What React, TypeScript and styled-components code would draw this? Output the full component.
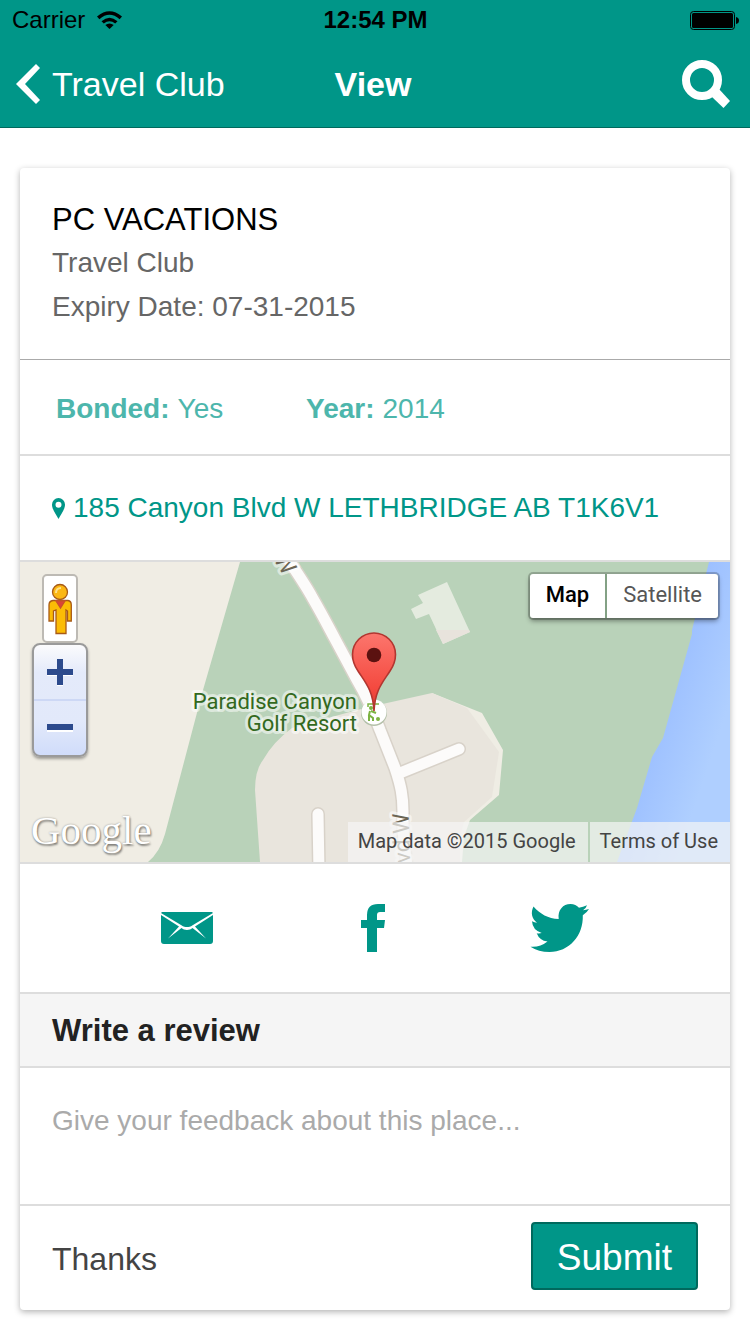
import React from "react";
import styled, { createGlobalStyle } from "styled-components";

const teal = "#009688";
const tealDark = "#00695d";
const line = "#dddddd";

const GlobalStyle = createGlobalStyle`
  *, *::before, *::after { box-sizing: border-box; }
  body {
    margin: 0;
    background: #fff;
    font-family: "Liberation Sans", Arial, sans-serif;
    font-size: 28px;
    line-height: 44px;
    color: #444;
  }
  button, textarea { font-family: inherit; margin: 0; }
  h1, h2, h3, p { margin: 0; font-weight: 400; }
`;

const Header = styled.header`
  background: ${teal};
  border-bottom: 1px solid ${tealDark};
`;

const Bar = styled.div<{ $height: number; $pad: string }>`
  display: grid;
  grid-template-columns: 1fr auto 1fr;
  align-items: center;
  height: ${(p) => p.$height}px;
  padding: ${(p) => p.$pad};
`;

const StatusText = styled.span<{ $bold?: boolean }>`
  display: flex;
  align-items: center;
  gap: 12px;
  font-size: 24px;
  line-height: 40px;
  font-weight: ${(p) => (p.$bold ? 700 : 400)};
  color: #000;
`;

const Battery = styled.svg`
  justify-self: end;
`;

const BackLink = styled.a`
  display: flex;
  align-items: center;
  gap: 12px;
  justify-self: start;
  color: #fff;
  font-size: 34px;
  text-decoration: none;
`;

const Title = styled.h1`
  color: #fff;
  font-size: 34px;
  font-weight: 700;
`;

const IconButton = styled.button`
  display: flex;
  justify-self: end;
  padding: 0;
  border: 0;
  background: none;
  color: #fff;
`;

const Card = styled.main`
  margin: 40px 20px 24px;
  border-radius: 4px;
  background: #fff;
  box-shadow: 0 2px 6px rgba(0, 0, 0, 0.3);
  overflow: hidden;
`;

const Section = styled.section<{ $pad: string; $border?: string }>`
  padding: ${(p) => p.$pad};
  border-bottom: ${(p) => p.$border ?? `2px solid ${line}`};
`;

const Name = styled.h2`
  color: #000;
  font-size: 31px;
  line-height: 42px;
`;

const Detail = styled.p`
  color: #666;
`;

const Facts = styled.dl`
  display: flex;
  margin: 0;
  color: #4db6ac;
`;

const Fact = styled.div`
  display: flex;
  gap: 8px;
  width: 250px;
  dt { font-weight: 700; }
  dd { margin: 0; }
`;

const Address = styled.a`
  display: flex;
  align-items: center;
  gap: 8px;
  color: ${teal};
  text-decoration: none;
  white-space: nowrap;
`;

const MapFrame = styled.section`
  position: relative;
  height: 302px;
  border-bottom: 2px solid ${line};
  font-family: Roboto, sans-serif;
  overflow: hidden;
`;

const MapCanvas = styled.svg`
  display: block;
  width: 100%;
  height: 300px;
`;

const MapTools = styled.div`
  position: absolute;
  top: 12px;
  left: 12px;
  display: flex;
  flex-direction: column;
  align-items: center;
`;

const Pegman = styled.button`
  display: flex;
  justify-content: center;
  align-items: center;
  width: 36px;
  height: 69px;
  padding: 0;
  border: 2px solid #bdbab4;
  border-radius: 5px;
  background: #fff;
`;

const Zoom = styled.div`
  display: flex;
  flex-direction: column;
  width: 56px;
  height: 114px;
  border: 2px solid #9a9a9a;
  border-radius: 8px;
  background: linear-gradient(#fbfbfd, #e4eafa 25%, #e2e9fa 70%, #d0dcfa);
  box-shadow: 0 2px 3px rgba(0, 0, 0, 0.35);
`;

const ZoomButton = styled.button`
  display: flex;
  flex: 1;
  align-items: center;
  justify-content: center;
  padding: 0;
  border: 0;
  background: none;
  & + & { border-top: 2px solid #cdd8f5; }
`;

const MapLogo = styled.span`
  position: absolute;
  left: 11px;
  bottom: 10px;
  font-family: "Liberation Serif", serif;
  font-size: 41px;
  line-height: 44px;
  color: #fff;
  text-shadow: 0 0 2px rgba(0, 0, 0, 0.4), 1px 2px 2px rgba(0, 0, 0, 0.4);
`;

const MapTypes = styled.div`
  position: absolute;
  top: 12px;
  right: 12px;
  display: flex;
  gap: 2px;
  border-radius: 3px;
  background: #83a185;
  box-shadow: 0 0 0 2px rgba(0, 0, 0, 0.2), 0 3px 5px rgba(0, 0, 0, 0.4);
`;

const MapType = styled.button<{ $active?: boolean }>`
  height: 44px;
  padding: 0 16px 4px;
  border: 0;
  border-radius: ${(p) => (p.$active ? "3px 0 0 3px" : "0 3px 3px 0")};
  background: #fff;
  color: ${(p) => (p.$active ? "#000" : "#565656")};
  font-size: 22px;
  font-weight: ${(p) => (p.$active ? 500 : 400)};
`;

const Credits = styled.div`
  position: absolute;
  right: 0;
  bottom: 0;
  display: flex;
  gap: 2px;
`;

const Credit = styled.span`
  padding: 0 12px 2px 10px;
  background: rgba(245, 245, 245, 0.7);
  color: #444;
  font-size: 20px;
  line-height: 38px;
  a { color: inherit; text-decoration: none; }
`;

const Share = styled.nav`
  display: grid;
  grid-template-columns: repeat(3, 1fr);
  align-items: center;
  justify-items: center;
  height: 130px;
  padding: 0 78px 0 74px;
  border-bottom: 2px solid ${line};
  color: ${teal};
  a { display: flex; color: inherit; }
`;

const ReviewHead = styled.label`
  display: block;
  padding: 15px 32px 13px;
  border-bottom: 2px solid ${line};
  background: #f5f5f5;
  color: #222;
  font-size: 31px;
  font-weight: 700;
`;

const Feedback = styled.textarea`
  display: block;
  width: 100%;
  height: 138px;
  padding: 31px 32px;
  border: 0;
  border-bottom: 2px solid ${line};
  outline: 0;
  resize: none;
  color: #444;
  font-size: 28px;
  line-height: 44px;
  &::placeholder { color: #aaa; opacity: 1; }
`;

const Footer = styled.footer`
  display: flex;
  align-items: center;
  justify-content: space-between;
  padding: 16px 32px 20px;
  font-size: 32px;
`;

const Note = styled.span`
  padding-top: 6px;
`;

const Submit = styled.button`
  height: 68px;
  padding: 4px 24px 0;
  border: 2px solid ${tealDark};
  border-radius: 4px;
  background: ${teal};
  color: #fff;
  font-size: 37px;
`;

const MAIN_ROAD =
  "M262 -12 C275 8 285 22 292 35 C303 54 308 64 315 77 L337 118 C346 133 352 146 360 168 L375 206 C381 224 383 234 383 250 Q382 270 387 304";

function MapDrawing() {
  return (
    <MapCanvas viewBox="0 0 710 300" preserveAspectRatio="xMidYMid slice" role="img" aria-label="Map of Paradise Canyon Golf Resort">
      <defs>
        <linearGradient id="water" gradientUnits="userSpaceOnUse" x1="640" y1="150" x2="700" y2="170">
          <stop offset="0" stopColor="#9dc0ff" />
          <stop offset="1" stopColor="#afcfff" />
        </linearGradient>
        <linearGradient id="marker" x1="0" y1="0" x2="0" y2="1">
          <stop offset="0" stopColor="#fc766d" />
          <stop offset="0.7" stopColor="#f44a40" />
          <stop offset="1" stopColor="#e03a30" />
        </linearGradient>
      </defs>
      <rect width="710" height="300" fill="#b9d2b9" />
      <path d="M0 0H220L183 128L145 272Q140 290 128 300H0Z" fill="#f0ede4" />
      <path d="M689 0L672 68V72L643 176L632 195L617 246L597 300H710V0Z" fill="url(#water)" />
      <path d="M412 131L462 151L483 188L479 233L450 258L444 275L442 300H400Z" fill="#efede4" />
      <path
        d="M240 300L235 228Q235 208 243 198Q253 180 272 166L337 148L367 141L412 131L447 146L479 190L472 235L444 260L440 275V300Z"
        fill="#e9e5dd"
      />
      <path d="M398 33L427 20L450 70L423 82L409 52L396 57L391 47L403 41Z" fill="#e4ebdf" />
      <path d="M416 68H449L450 70L423 82Z" fill="#e8e3dc" />
      <g fill="none" strokeLinecap="round" strokeLinejoin="round">
        <g stroke="#d8d2c9" strokeWidth="14">
          <path d={MAIN_ROAD} />
          <path d="M380 211L439 187M298 252L299 310" />
        </g>
        <g stroke="#fcfbfa" strokeWidth="11">
          <path d={MAIN_ROAD} />
          <path d="M380 211L439 187M298 252L299 310" />
        </g>
      </g>
      <g fontFamily="Roboto, sans-serif" stroke="#fff" strokeOpacity="0.5" strokeWidth="6" strokeLinejoin="round" paintOrder="stroke">
        <g fill="#6b6553" fontSize="23">
          <text x="253" y="-3" transform="rotate(58 253 -3)">W</text>
          <text x="391" y="321" transform="rotate(-92 391 321)">Blvd W</text>
        </g>
        <g fill="#33691e" fontSize="22" textAnchor="end">
          <text x="337" y="147">Paradise Canyon</text>
          <text x="337" y="169">Golf Resort</text>
        </g>
      </g>
      <circle cx="354" cy="151" r="13" fill="#b4c0a9" />
      <circle cx="354" cy="150" r="12.5" fill="#fff" />
      <g fill="none" stroke="#7cb342" strokeWidth="2">
        <path d="M359 142H348V145" strokeWidth="1.500" />
        <path d="M350 149L349 153L353 156V159M349 153V159" />
        <path d="M351 149L356 151" />
      </g>
      <circle cx="351" cy="146" r="2" fill="#7cb342" />
      <circle cx="358" cy="157" r="2" fill="#7cb342" />
      <path
        d="M354 149C353 128 345 120 338 109Q332.500 101 332.500 92.500A21.500 21.500 0 0 1 375.500 92.500Q375.500 101 370 109C363 120 355 128 354 149Z"
        fill="url(#marker)"
        stroke="#b23630"
        strokeWidth="1.600"
      />
      <circle cx="354" cy="93" r="7.300" fill="#5b1210" />
    </MapCanvas>
  );
}

export default function App() {
  return (
    <>
      <GlobalStyle />
      <Header>
        <Bar $height={40} $pad="0 11px 0 12px">
          <StatusText>
            Carrier
            <svg width="25" height="18" viewBox="0 0 25 18">
              <path d="M0 5.500Q12.500 -5 25 5.500L22.600 8.200Q12.500 -0.500 2.400 8.200Z" />
              <path d="M4.500 10.300Q12.500 3.300 20.500 10.300L18.200 12.600Q12.500 8 6.800 12.600Z" />
              <path d="M12.500 18L8.300 14Q12.500 10.800 16.700 14Z" />
            </svg>
          </StatusText>
          <StatusText $bold>12:54 PM</StatusText>
          <Battery width="49" height="19" viewBox="0 0 49 19">
            <rect x="0.500" y="0.500" width="44" height="18" rx="3" fill="none" stroke="#000" />
            <rect x="2" y="2" width="41" height="15" rx="1.500" />
            <path d="M46 6Q49 6.500 49 9.500T46 13Z" />
          </Battery>
        </Bar>
        <Bar $height={87} $pad="0 20px 0 16px">
          <BackLink href="#travel-club">
            <svg width="24" height="40" viewBox="0 0 24 40">
              <path d="M0 20L20 0L24 4L9 20L24 36L20 40Z" fill="#fff" />
            </svg>
            Travel Club
          </BackLink>
          <Title>View</Title>
          <IconButton aria-label="Search">
            <svg width="48" height="48" viewBox="0 0 48 48">
              <circle cx="20" cy="20" r="16" fill="none" stroke="#fff" strokeWidth="8" />
              <path d="M37 29L48 41L41.500 48L30 37Z" fill="#fff" />
            </svg>
          </IconButton>
        </Bar>
      </Header>
      <Card>
        <Section $pad="31px 32px 30px" $border="1px solid #aaa">
          <Name>PC VACATIONS</Name>
          <Detail>Travel Club</Detail>
          <Detail>Expiry Date: 07-31-2015</Detail>
        </Section>
        <Section $pad="27px 36px 23px">
          <Facts>
            <Fact>
              <dt>Bonded:</dt>
              <dd>Yes</dd>
            </Fact>
            <Fact>
              <dt>Year:</dt>
              <dd>2014</dd>
            </Fact>
          </Facts>
        </Section>
        <Section $pad="30px 32px">
          <Address href="#map">
            <svg width="13" height="21" viewBox="0 0 13 21">
              <path d="M6.500 0A6.500 6.500 0 0 0 0 6.500C0 11.500 4 16 6.500 21C9 16 13 11.500 13 6.500A6.500 6.500 0 0 0 6.500 0ZM6.500 3.800A3 3 0 1 1 6.500 9.800A3 3 0 0 1 6.500 3.800Z" fill={teal} fillRule="evenodd" />
            </svg>
            185 Canyon Blvd W LETHBRIDGE AB T1K6V1
          </Address>
        </Section>
        <MapFrame id="map">
          <MapDrawing />
          <MapTools>
            <Pegman aria-label="Street View">
              <svg width="24" height="52" viewBox="0 0 24 52" stroke="#a85a16" strokeWidth="1.300">
                <path d="M5 17.500H20Q23.300 18 23.300 22V38H19.500V28L18 27V50.500H8V27L5.500 28V38H1V22Q1 18 5 17.500Z" fill="#fbbc05" />
                <path d="M8 18H17L12.500 25Z" fill="#db4437" stroke="#c9502c" />
                <circle cx="12" cy="9" r="7.500" fill="#fbb713" />
                <path d="M8 10Q8 5 13 5" fill="none" stroke="#ffe08a" strokeWidth="2" />
              </svg>
            </Pegman>
            <Zoom>
              <ZoomButton aria-label="Zoom in">
                <svg width="26" height="27" viewBox="0 0 26 27">
                  <path d="M10 1H16V11H26V17H16V27H10V17H0V11H10Z" fill="#fff" />
                  <path d="M10 0H16V10H26V16H16V26H10V16H0V10H10Z" fill="#2c4a8c" />
                </svg>
              </ZoomButton>
              <ZoomButton aria-label="Zoom out">
                <svg width="26" height="8" viewBox="0 0 26 8">
                  <path d="M0 1H26V8H0Z" fill="#fff" />
                  <path d="M0 0H26V6H0Z" fill="#2c4a8c" />
                </svg>
              </ZoomButton>
            </Zoom>
          </MapTools>
          <MapLogo>Google</MapLogo>
          <MapTypes>
            <MapType $active>Map</MapType>
            <MapType>Satellite</MapType>
          </MapTypes>
          <Credits>
            <Credit>Map data ©2015 Google</Credit>
            <Credit>
              <a href="#terms">Terms of Use</a>
            </Credit>
          </Credits>
        </MapFrame>
        <Share aria-label="Share">
          <a href="#email" aria-label="Email">
            <svg width="52" height="32" viewBox="0 0 52 32" fill="currentColor">
              <path d="M1 0H51L52 1L32 13C29 15 28 15 26 15S23 15 20 13L0 1Z" />
              <path d="M0 3L18 14.500L7 26.500L20.500 16C23 18.500 29 18.500 31.500 16L45 26.500L34 14.500L52 3V29Q52 32 49 32H3Q0 32 0 29Z" />
            </svg>
          </a>
          <a href="#facebook" aria-label="Facebook">
            <svg width="24" height="48" viewBox="0 0 24 48" fill="currentColor">
              <path d="M24 8H19Q16 8 16 11V16H24L23 24H16V48H6V24H0V16H6V11Q6 0 17 0H24Z" />
            </svg>
          </a>
          <a href="#twitter" aria-label="Twitter">
            <svg width="59" height="48" viewBox="0 0 59 48" fill="currentColor">
              <path d="M3.500 2.500C10 10 18 14.500 28.700 15C27.500 6 33 0 40.500 0C44 0 47 1.500 49 3.700Q53 3 57 1.200Q56 4.500 53 6.300Q56 6 59 5Q57 8.500 52.800 11.300C53.500 32 39 48 19.500 48Q8.500 48 0.500 42.700Q10 43.500 17.500 37.500Q9.500 36.500 6.700 29.200Q9.500 29.700 11.700 28.900Q2.500 26 2 17.200Q4.500 18.500 7 18.700C1.500 14.500 0.500 8.500 3.500 2.500Z" />
            </svg>
          </a>
        </Share>
        <ReviewHead htmlFor="feedback">Write a review</ReviewHead>
        <Feedback id="feedback" placeholder="Give your feedback about this place..." />
        <Footer>
          <Note>Thanks</Note>
          <Submit>Submit</Submit>
        </Footer>
      </Card>
    </>
  );
}
